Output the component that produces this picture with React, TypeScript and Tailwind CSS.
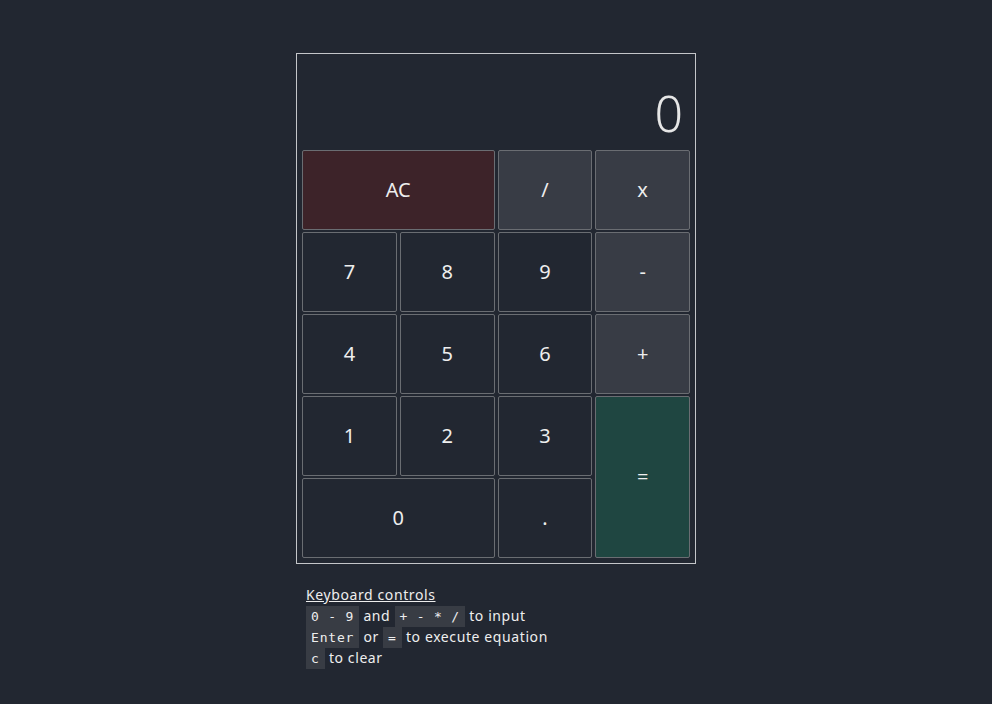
import React, { useState } from "react";

type Key = { label: string; kind: "num" | "op" | "clear" | "eq"; span?: string };

const keys: Key[] = [
  { label: "AC", kind: "clear", span: "col-span-2" },
  { label: "/", kind: "op" },
  { label: "x", kind: "op" },
  { label: "7", kind: "num" },
  { label: "8", kind: "num" },
  { label: "9", kind: "num" },
  { label: "-", kind: "op" },
  { label: "4", kind: "num" },
  { label: "5", kind: "num" },
  { label: "6", kind: "num" },
  { label: "+", kind: "op" },
  { label: "1", kind: "num" },
  { label: "2", kind: "num" },
  { label: "3", kind: "num" },
  { label: "=", kind: "eq", span: "row-span-2" },
  { label: "0", kind: "num", span: "col-span-2" },
  { label: ".", kind: "num" },
];

const keyColor = (kind: Key["kind"]) => {
  switch (kind) {
    case "clear":
      return "bg-[#3d2329]";
    case "op":
      return "bg-[#383c45]";
    case "eq":
      return "bg-[#1f4641]";
    default:
      return "bg-[#222731]";
  }
};

const Code: React.FC<{ children: React.ReactNode }> = ({ children }) => (
  <code className="bg-[#383c44] px-[5px] py-[3px] font-['DejaVu_Sans_Mono',monospace] text-[13px] leading-none tracking-[0.8px]">{children}</code>
);

const App: React.FC = (): JSX.Element => {
  const [display] = useState("0");

  return (
    <div className="min-h-[704px] bg-[#222731] pt-[53px] text-[#eeeeee] font-['Noto_Sans',sans-serif]">
      <div className="mx-auto w-[400px]">
        <div className="border border-[#c4c6c9] px-[5px] pb-[5px]">
          <div className="flex h-[96px] items-center justify-end pr-[7px] pt-[22px] text-[50px] font-light leading-none text-[#e6e6e6]">
            {display}
          </div>
          <div className="grid grid-cols-4 auto-rows-[80px] gap-x-[3px] gap-y-[2px]">
            {keys.map((k) => (
              <button
                key={k.label}
                className={`${k.span ?? ""} ${keyColor(k.kind)} flex items-center justify-center rounded-[2px] border border-[#6a6d72] text-[20px] text-[#eeeeee]`}
              >
                {k.label}
              </button>
            ))}
          </div>
        </div>

        <div className="mt-[20px] pl-[10px] text-[14px] leading-[21px] tracking-[0.6px] text-[#eeeeee]">
          <div className="underline">Keyboard controls</div>
          <div>
            <Code>0 - 9</Code> and <Code>+ - * /</Code> to input
          </div>
          <div>
            <Code>Enter</Code> or <Code>=</Code> to execute equation
          </div>
          <div>
            <Code>c</Code> to clear
          </div>
        </div>
      </div>
    </div>
  );
};

export default App;
